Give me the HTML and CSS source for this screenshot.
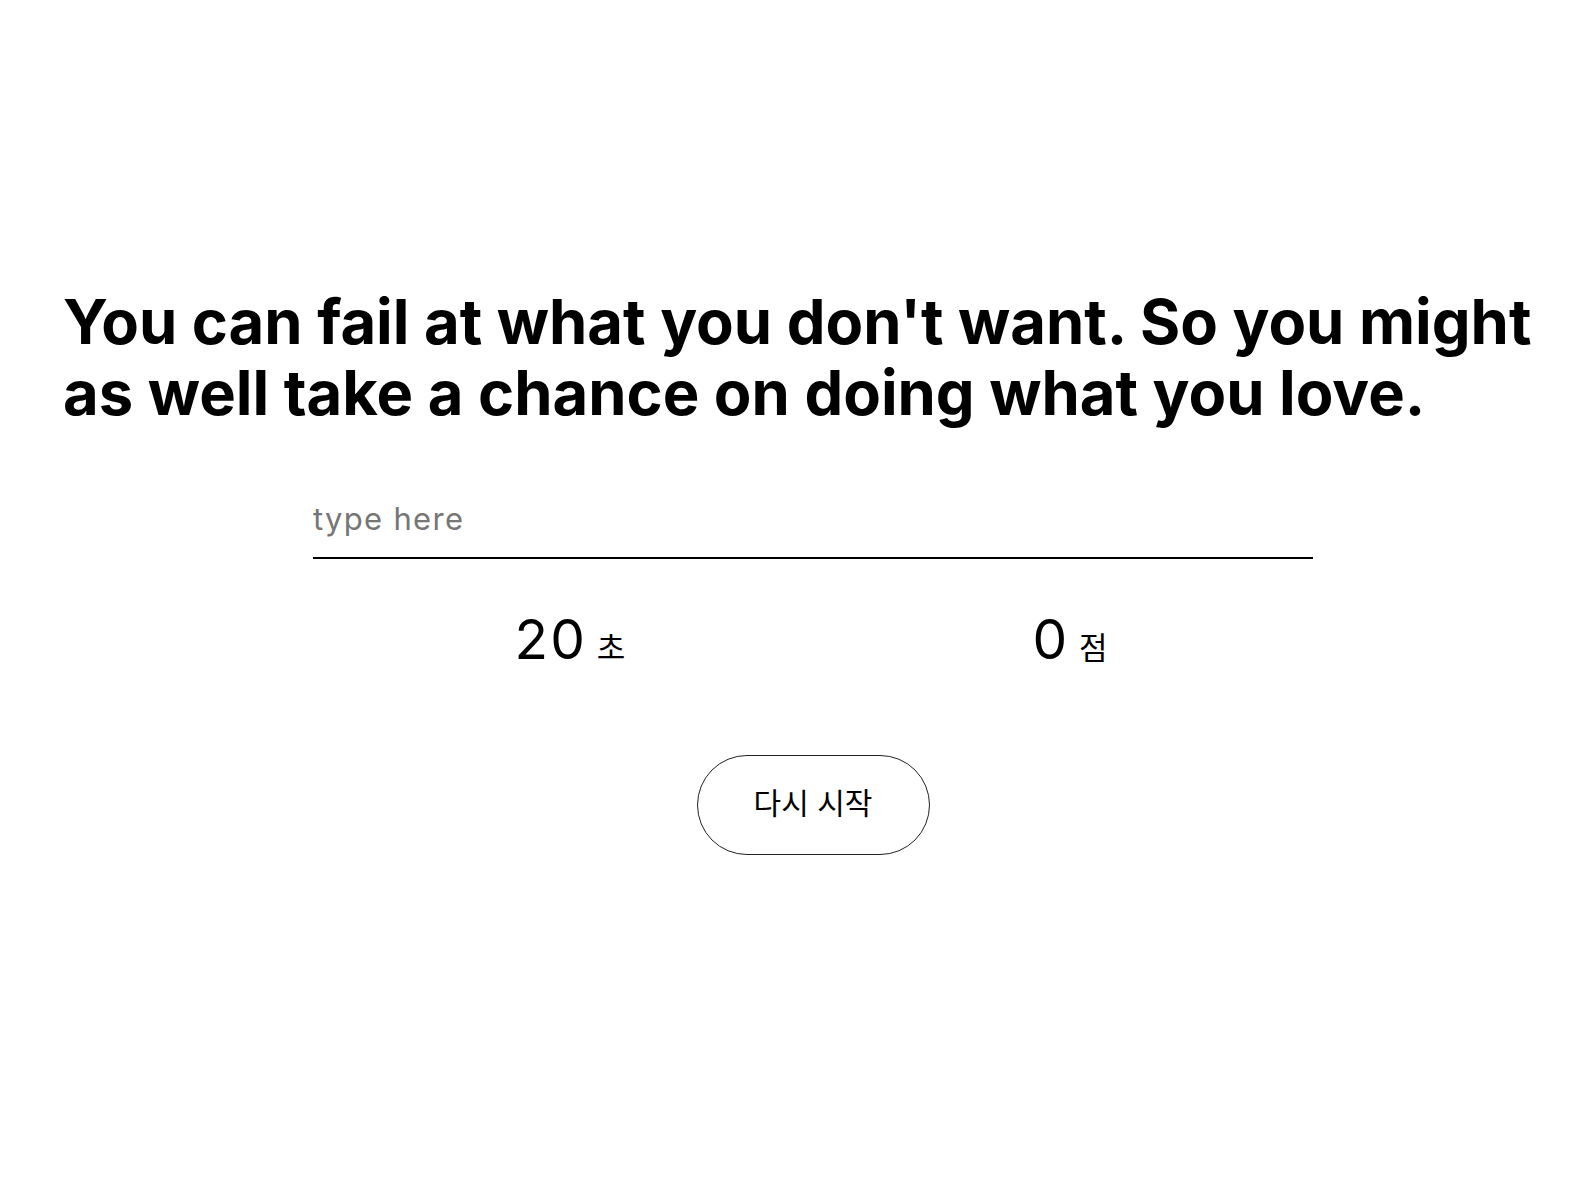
FILE: index.html
```html
<!DOCTYPE html>
<html lang="ko">
<head>
<meta charset="utf-8">
<title>Typing Game</title>
<link rel="stylesheet" href="styles.css">
</head>
<body>
<main class="game">
  <h1 class="quote">You can fail at what you don't want. So you might as well take a chance on doing what you love.</h1>
  <div class="field">
    <input class="typing" type="text" placeholder="type here">
  </div>
  <div class="stats">
    <div class="stat"><span class="num">20</span><span class="unit">초</span></div>
    <div class="stat"><span class="num">0</span><span class="unit">점</span></div>
  </div>
  <div class="actions">
    <button class="restart" type="button">다시 시작</button>
  </div>
</main>
</body>
</html>
```
FILE: styles.css
```css
html, body {
  margin: 0;
  background: #fff;
  color: #000;
  font-family: Inter, "Noto Sans CJK KR", sans-serif;
}
.game {
  width: 1500px;
  margin-left: 63px;
  padding-top: 286px;
}
.quote {
  margin: 0;
  font-size: 61.5px;
  line-height: 71px;
  font-weight: 700;
  letter-spacing: 0;
}
.field {
  width: 1000px;
  margin: 64px auto 0;
}
.typing {
  display: block;
  width: 100%;
  box-sizing: border-box;
  border: none;
  border-bottom: 2px solid #000;
  outline: none;
  padding: 8px 0 20px;
  font-family: Inter, sans-serif;
  font-size: 31px;
  letter-spacing: 1.3px;
  color: #000;
  background: transparent;
}
.typing::placeholder {
  color: #767676;
}
.stats {
  width: 1000px;
  margin: 53px auto 0;
  display: flex;
}
.stat {
  flex: 1;
  display: flex;
  justify-content: center;
  align-items: baseline;
  gap: 10px;
  padding-left: 14px;
}
.num {
  font-size: 55px;
  font-weight: 400;
  line-height: 1;
  letter-spacing: 2px;
}
.unit {
  font-family: "Noto Sans CJK KR", sans-serif;
  font-size: 31px;
  line-height: 1;
}
.actions {
  display: flex;
  justify-content: center;
  margin-top: 88px;
}
.restart {
  width: 233px;
  height: 100px;
  padding: 0 0 8px;
  border: 1px solid #222;
  border-radius: 50px;
  background: #fff;
  font-family: "Noto Sans CJK KR", sans-serif;
  font-size: 30px;
  color: #000;
  cursor: pointer;
}
```
